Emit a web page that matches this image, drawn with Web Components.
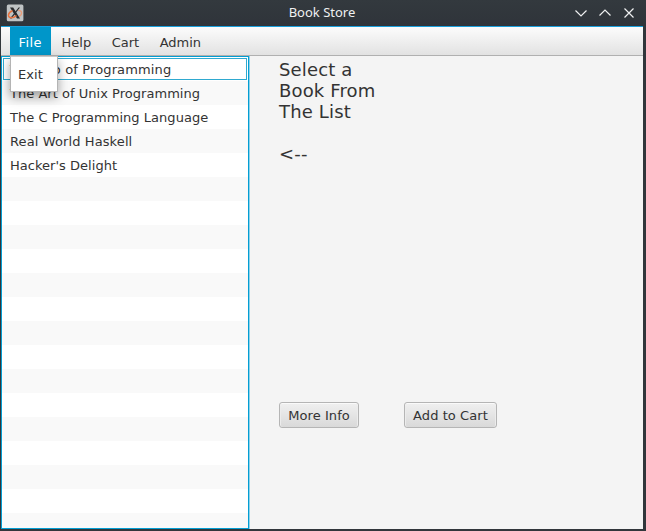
<!DOCTYPE html>
<html lang="en"><head><meta charset="utf-8"><title>Book Store</title>
<style>
html,body{margin:0;height:531px;overflow:hidden;background:#31363b}
</style></head><body>
<book-window></book-window>
<script>
const define = (name, html) => customElements.define(name, class extends HTMLElement {
  constructor() {
    super();
    this.attachShadow({mode: 'open'}).innerHTML = html;
  }
});

define('title-bar', `<style>
:host{display:grid;grid-template-columns:1fr auto 1fr;align-items:center;height:26px;box-sizing:border-box;background:linear-gradient(#33393e,#2f343a);color:#eff0f1;font:13px/24px "Noto Sans",sans-serif}
.logo{margin:0 0 1px 6px;display:block}
.title{padding-right:2px;margin-bottom:2px}
.controls{display:flex;gap:8px;justify-self:end;margin:0 9px 1px 0}
.controls svg{display:block}
</style>
<svg class="logo" width="18" height="18" viewBox="0 0 18 18">
<rect x="0.8" y="0.6" width="16.6" height="16.6" rx="1.5" fill="#bfc3c4"/>
<path d="M4 3.4H7.2L14 14.6H11Z" fill="#292b2d"/>
<path d="M12.6 3.4H14L5.6 14.6H4Z" fill="#292b2d"/>
<path d="M6.5 6.8C1.6 8.6 1 13.6 5.5 13.8C7.5 13.8 9 12.8 10.5 11.6" fill="none" stroke="#e8733e" stroke-width="1.5"/>
<path d="M12.2 6.4C16.8 6.4 16.4 10.8 13 12.4" fill="none" stroke="#e79a78" stroke-width="1.3"/>
</svg>
<span class="title"><slot></slot></span>
<div class="controls">
<svg width="16" height="16" viewBox="0 0 16 16" fill="none" stroke="#eff0f1" stroke-width="1.2"><path d="M2.5 5.5L8 11L13.5 5.5"/></svg>
<svg width="16" height="16" viewBox="0 0 16 16" fill="none" stroke="#eff0f1" stroke-width="1.2"><path d="M2.5 10.5L8 5L13.5 10.5"/></svg>
<svg width="16" height="16" viewBox="0 0 16 16" fill="none" stroke="#eff0f1" stroke-width="1.2"><path d="M3.5 3.5L12.5 12.5M12.5 3.5L3.5 12.5"/></svg>
</div>`);

define('menu-bar', `<style>
:host{display:flex;height:30px;box-sizing:border-box;padding-left:9px;border-top:1px solid #1aa0dc;border-bottom:1px solid #b0b0b0;background:linear-gradient(#fcfcfc,#e2e2e2)}
</style><slot></slot>`);

define('menu-item', `<style>
:host{display:block;position:relative;height:28px;line-height:32px;padding:0 9px 0 8.5px;white-space:nowrap}
:host([open]){background:#0096c9;color:#fff;width:41px;box-sizing:border-box;padding-right:0;letter-spacing:.4px}
</style><slot></slot><slot name="popup"></slot>`);

define('menu-popup', `<style>
:host{display:block;position:absolute;left:0;top:29px;width:48px;height:36px;box-sizing:border-box;z-index:2;background:#fff;color:#333;border:1px solid #b4b4b4;border-top-color:#c8c8c8;line-height:36px;padding-left:7px;letter-spacing:.1px;box-shadow:0 5px 10px rgba(0,0,0,.36)}
</style><slot></slot>`);

define('book-list', `<style>
:host{display:block;width:248px;height:473px;box-sizing:border-box;border:1px solid #039ed3;box-shadow:1px 0 0 #8fd2ea;background:repeating-linear-gradient(#fff 0 24px,#f9f9f9 24px 48px)}
</style><slot></slot>`);

define('book-row', `<style>
:host{display:block;height:24px;line-height:25px;box-sizing:border-box;padding-left:8px;white-space:nowrap;letter-spacing:.03px}
:host([focused]){margin:1px;height:22px;border:1px solid #2fa9d0;padding-left:6px;line-height:22px}
</style><slot></slot>`);

define('push-button', `<style>
:host{display:block;height:26px;box-sizing:border-box;border:1px solid #b5b5b5;border-radius:3px;background:linear-gradient(#f0f0f0,#d9d9d9);box-shadow:inset 0 1px 0 #fafafa,inset 1px 0 0 #ececec,inset -1px 0 0 #ececec;text-align:center;line-height:26px;white-space:nowrap;letter-spacing:.08px}
</style><slot></slot>`);

define('detail-pane', `<style>
:host{display:flex;flex-direction:column;justify-content:space-between;height:473px;box-sizing:border-box;padding:3px 0 101px 30px}
.message{font-size:18px;line-height:21px;white-space:pre;letter-spacing:.15px}
.actions{display:flex;gap:45px}
</style><div class="message"><slot></slot></div><div class="actions"><slot name="action"></slot></div>`);

define('book-window', `<style>
:host{display:block;width:646px;height:531px;background:#31363b;color:#333;font:13px "DejaVu Sans",sans-serif}
.client{margin:0 3px 0 1px;background:#f4f4f4;height:503px}
.body{display:flex}
</style>
<title-bar>Book Store</title-bar>
<div class="client">
<menu-bar><menu-item open>File<menu-popup slot="popup">Exit</menu-popup></menu-item><menu-item style="margin-left:2px">Help</menu-item><menu-item style="margin-left:3px">Cart</menu-item><menu-item style="margin-left:3px">Admin</menu-item></menu-bar>
<div class="body">
<book-list><book-row focused style="letter-spacing:.13px">The Tao of Programming</book-row><book-row>The Art of Unix Programming</book-row><book-row>The C Programming Language</book-row><book-row style="letter-spacing:.11px">Real World Haskell</book-row><book-row>Hacker's Delight</book-row></book-list>
<detail-pane>Select a
Book From
The List

&lt;--<push-button slot="action" style="width:80px">More Info</push-button><push-button slot="action" style="width:93px">Add to Cart</push-button></detail-pane>
</div></div>`);
</script></body></html>
